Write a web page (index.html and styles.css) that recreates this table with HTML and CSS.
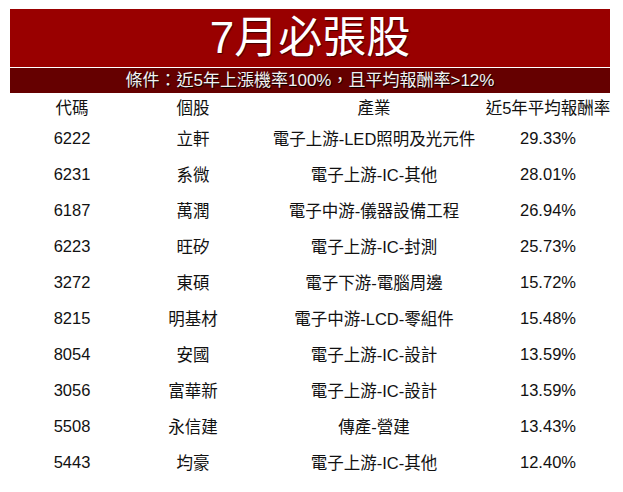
FILE: index.html
```html
<!DOCTYPE html>
<html lang="zh-Hant">
<head>
<meta charset="utf-8">
<link rel="stylesheet" href="styles.css">
</head>
<body>
<div class="page">
  <div class="title">7月必張股</div>
  <div class="subtitle">條件：近5年上漲機率100%，且平均報酬率&gt;12%</div>
  <div class="table">
    <div class="row head"><div class="c">代碼</div><div class="c">個股</div><div class="c">產業</div><div class="c">近5年平均報酬率</div></div>
    <div class="row"><div class="c">6222</div><div class="c">立軒</div><div class="c">電子上游-LED照明及光元件</div><div class="c">29.33%</div></div>
    <div class="row"><div class="c">6231</div><div class="c">系微</div><div class="c">電子上游-IC-其他</div><div class="c">28.01%</div></div>
    <div class="row"><div class="c">6187</div><div class="c">萬潤</div><div class="c">電子中游-儀器設備工程</div><div class="c">26.94%</div></div>
    <div class="row"><div class="c">6223</div><div class="c">旺矽</div><div class="c">電子上游-IC-封測</div><div class="c">25.73%</div></div>
    <div class="row"><div class="c">3272</div><div class="c">東碩</div><div class="c">電子下游-電腦周邊</div><div class="c">15.72%</div></div>
    <div class="row"><div class="c">8215</div><div class="c">明基材</div><div class="c">電子中游-LCD-零組件</div><div class="c">15.48%</div></div>
    <div class="row"><div class="c">8054</div><div class="c">安國</div><div class="c">電子上游-IC-設計</div><div class="c">13.59%</div></div>
    <div class="row"><div class="c">3056</div><div class="c">富華新</div><div class="c">電子上游-IC-設計</div><div class="c">13.59%</div></div>
    <div class="row"><div class="c">5508</div><div class="c">永信建</div><div class="c">傳產-營建</div><div class="c">13.43%</div></div>
    <div class="row"><div class="c">5443</div><div class="c">均豪</div><div class="c">電子上游-IC-其他</div><div class="c">12.40%</div></div>
  </div>
</div>
</body>
</html>
```
FILE: styles.css
```css
html, body {
  margin: 0;
  padding: 0;
  background: #fff;
}
body {
  font-family: "Liberation Sans", Arial, "Noto Sans CJK TC", sans-serif;
  color: #111;
}
.page {
  width: 600px;
  padding: 9px 0 0 10px;
}
.title {
  height: 58px;
  background: #990000;
  color: #fff;
  font-size: 44px;
  line-height: 58px;
  text-align: center;
  text-shadow: 1px 1px 1px #400000;
}
.subtitle {
  margin-top: 1px;
  height: 25px;
  background: #650000;
  color: #f2f2f2;
  font-size: 17px;
  line-height: 25px;
  text-align: center;
  text-shadow: 1px 1px 1px #000;
}
.table {
  display: flex;
  flex-direction: column;
}
.row {
  display: grid;
  grid-template-columns: 124px 118px 244px 104px;
  height: 36px;
  align-items: center;
  font-size: 16.5px;
}
.row.head {
  height: 27px;
}
.c {
  display: flex;
  justify-content: center;
  white-space: nowrap;
}
```
